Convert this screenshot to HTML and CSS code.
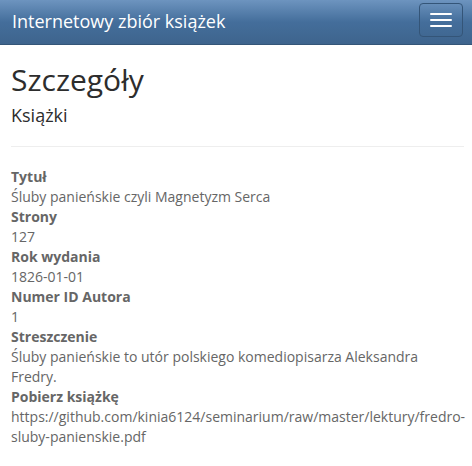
FILE: index.html
```html
<!DOCTYPE html>
<html lang="pl">
<head>
<meta charset="utf-8">
<title>Szczegóły</title>
<link rel="stylesheet" href="styles.css">
</head>
<body>
<nav class="navbar">
  <a class="brand" href="#">Internetowy zbiór książek</a>
  <button class="toggle" type="button" aria-label="Menu">
    <span class="bar"></span>
    <span class="bar"></span>
    <span class="bar"></span>
  </button>
</nav>
<main class="content">
  <h2 class="title">Szczegóły</h2>
  <div>
    <h4 class="subtitle">Książki</h4>
    <hr class="rule">
    <dl class="details">
      <dt>Tytuł</dt>
      <dd>Śluby panieńskie czyli Magnetyzm Serca</dd>
      <dt>Strony</dt>
      <dd>127</dd>
      <dt>Rok wydania</dt>
      <dd>1826-01-01</dd>
      <dt>Numer ID Autora</dt>
      <dd>1</dd>
      <dt>Streszczenie</dt>
      <dd>Śluby panieńskie to utór polskiego komediopisarza Aleksandra Fredry.</dd>
      <dt>Pobierz książkę</dt>
      <dd>https://github.com/kinia6124/seminarium/raw/master/lektury/fredro-sluby-panienskie.pdf</dd>
    </dl>
  </div>
</main>
</body>
</html>
```
FILE: styles.css
```css
* { box-sizing: border-box; }
html, body {
  margin: 0;
  padding: 0;
  background: #fff;
}
body {
  font-family: "Open Sans", "DejaVu Sans", sans-serif;
  font-size: 14px;
  line-height: 20px;
  color: #666666;
}
.navbar {
  height: 45px;
  display: flex;
  align-items: flex-start;
  justify-content: space-between;
  background-image: linear-gradient(#6d94bf, #446e9b 50%, #3e648d);
  border-bottom: 1px solid #345578;
  padding: 0 9px 0 12px;
}
.brand {
  color: #ffffff;
  text-decoration: none;
  font-size: 18px;
  line-height: 20px;
  padding-top: 11px;
}
.toggle {
  margin-top: 3px;
  width: 44px;
  height: 34px;
  padding: 9px 10px;
  background: transparent;
  border: 1px solid #345578;
  border-radius: 4px;
  display: flex;
  flex-direction: column;
  gap: 4px;
  align-items: center;
}
.bar {
  display: block;
  width: 22px;
  height: 2px;
  border-radius: 1px;
  background: #ffffff;
}
.content {
  padding: 0 8px 0 11px;
}
.title {
  margin: 18px 0 10px;
  font-size: 30px;
  line-height: 33px;
  font-weight: 500;
  color: #2d2d2d;
}
.subtitle {
  margin: 10px 0 10px;
  font-size: 18px;
  line-height: 19.8px;
  font-weight: 500;
  color: #2d2d2d;
}
.rule {
  margin: 20px 0;
  border: 0;
  border-top: 1px solid #eeeeee;
  height: 0;
}
.details {
  margin: 0 0 20px;
}
.details dt {
  font-weight: 700;
}
.details dd {
  margin: 0;
}
```
